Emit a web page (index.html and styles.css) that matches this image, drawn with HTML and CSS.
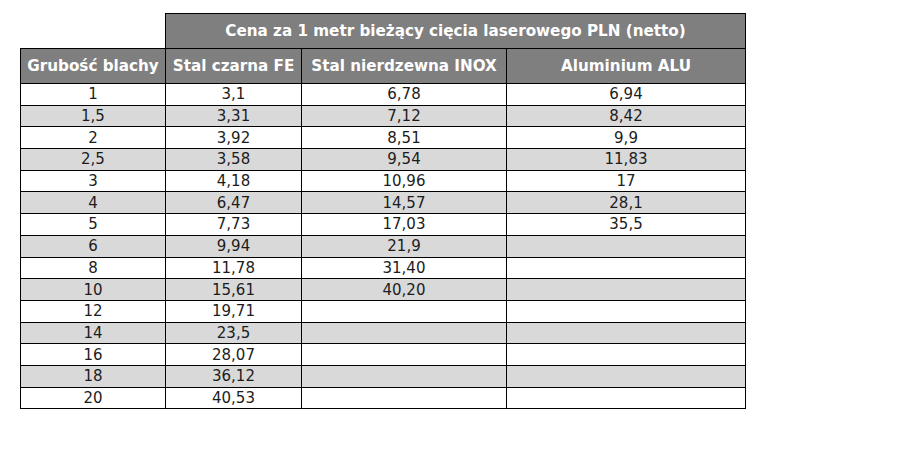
FILE: index.html
```html
<!DOCTYPE html>
<html lang="pl">
<head>
<meta charset="utf-8">
<title>Cennik cięcia laserowego</title>
<link rel="stylesheet" href="styles.css">
</head>
<body>
<div class="page">
  <table class="prices">
    <colgroup>
      <col class="c1"><col class="c2"><col class="c3"><col class="c4">
    </colgroup>
    <thead>
      <tr class="top">
        <th class="blank"></th>
        <th colspan="3">Cena za 1 metr bieżący cięcia laserowego PLN (netto)</th>
      </tr>
      <tr class="sub">
        <th>Grubość blachy</th>
        <th>Stal czarna FE</th>
        <th>Stal nierdzewna INOX</th>
        <th>Aluminium ALU</th>
      </tr>
    </thead>
    <tbody>
      <tr><td>1</td><td>3,1</td><td>6,78</td><td>6,94</td></tr>
      <tr><td>1,5</td><td>3,31</td><td>7,12</td><td>8,42</td></tr>
      <tr><td>2</td><td>3,92</td><td>8,51</td><td>9,9</td></tr>
      <tr><td>2,5</td><td>3,58</td><td>9,54</td><td>11,83</td></tr>
      <tr><td>3</td><td>4,18</td><td>10,96</td><td>17</td></tr>
      <tr><td>4</td><td>6,47</td><td>14,57</td><td>28,1</td></tr>
      <tr><td>5</td><td>7,73</td><td>17,03</td><td>35,5</td></tr>
      <tr><td>6</td><td>9,94</td><td>21,9</td><td></td></tr>
      <tr><td>8</td><td>11,78</td><td>31,40</td><td></td></tr>
      <tr><td>10</td><td>15,61</td><td>40,20</td><td></td></tr>
      <tr><td>12</td><td>19,71</td><td></td><td></td></tr>
      <tr><td>14</td><td>23,5</td><td></td><td></td></tr>
      <tr><td>16</td><td>28,07</td><td></td><td></td></tr>
      <tr><td>18</td><td>36,12</td><td></td><td></td></tr>
      <tr><td>20</td><td>40,53</td><td></td><td></td></tr>
    </tbody>
  </table>
</div>
</body>
</html>
```

FILE: styles.css
```css
html, body {
  margin: 0;
  padding: 0;
  background: #ffffff;
}

.page {
  padding: 13px 0 0 20px;
  font-family: "DejaVu Sans", Verdana, sans-serif;
}

.prices {
  border-collapse: collapse;
  table-layout: fixed;
  width: 725px;
}

.c1 { width: 145px; }
.c2 { width: 136px; }
.c3 { width: 205px; }
.c4 { width: 239px; }

.prices th {
  background: #7f7f7f;
  color: #ffffff;
  font-weight: bold;
  font-size: 15.2px;
  height: 34px;
  padding: 0;
  border: 1px solid #000000;
  text-align: center;
  vertical-align: middle;
  white-space: nowrap;
}

.prices th.blank {
  background: transparent;
  border: none;
  border-bottom: 1px solid #000000;
}

.prices td {
  font-size: 15px;
  color: #1c1c1c;
  height: 20.7px;
  padding: 0;
  line-height: 18px;
  border: 1px solid #000000;
  text-align: center;
  vertical-align: middle;
}

.prices tbody tr:nth-child(even) td {
  background: #d9d9d9;
}
```
